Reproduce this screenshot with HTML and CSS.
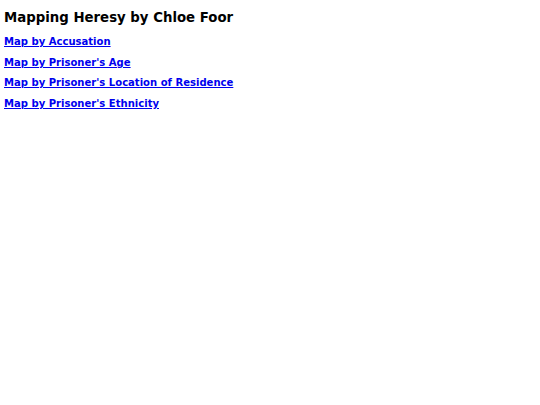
FILE: index.html
```html
<!DOCTYPE html>
<html>
<head>
<meta charset="utf-8">
<title>Mapping Heresy</title>
<link rel="stylesheet" href="styles.css">
</head>
<body>
<h1 class="title">Mapping Heresy by Chloe Foor</h1>
<nav class="maps">
  <a class="map-link" href="#accusation">Map by Accusation</a>
  <a class="map-link" href="#age">Map by Prisoner's Age</a>
  <a class="map-link" href="#residence">Map by Prisoner's Location of Residence</a>
  <a class="map-link" href="#ethnicity">Map by Prisoner's Ethnicity</a>
</nav>
</body>
</html>
```
FILE: styles.css
```css
body {
  margin: 0;
  padding: 10px 4px;
  background: #fff;
  font-family: "DejaVu Sans", Verdana, sans-serif;
}
.title {
  margin: 0 0 9px;
  font-size: 13.3px;
  font-weight: bold;
  color: #000;
  line-height: 16px;
}
.maps {
  display: flex;
  flex-direction: column;
  align-items: flex-start;
  gap: 7.6px;
}
.map-link {
  font-size: 10.05px;
  font-weight: bold;
  color: #0000ee;
  line-height: 13px;
}
```
